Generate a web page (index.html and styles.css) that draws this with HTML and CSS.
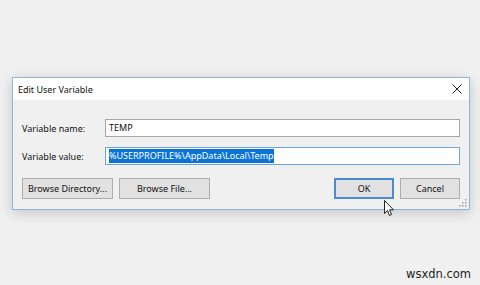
FILE: index.html
```html
<!DOCTYPE html>
<html>
<head>
<meta charset="utf-8">
<link rel="stylesheet" href="styles.css">
</head>
<body>
<div class="dialog">
  <div class="titlebar">
    <span class="title">Edit User Variable</span>
    <svg class="close" width="10" height="10" viewBox="0 0 10 10"><path d="M0.5 0.5 L9.5 9.5 M9.5 0.5 L0.5 9.5" stroke="#222" stroke-width="1" fill="none"/></svg>
  </div>
  <div class="content">
    <div class="row">
      <label class="label">Variable name:</label>
      <div class="field">TEMP</div>
    </div>
    <div class="row">
      <label class="label">Variable value:</label>
      <div class="field focused"><span class="sel">%USERPROFILE%\AppData\Local\Temp</span></div>
    </div>
    <div class="buttons">
      <button class="btn wide">Browse Directory...</button>
      <button class="btn wide">Browse File...</button>
      <span class="spacer"></span>
      <button class="btn small default">OK</button>
      <button class="btn small">Cancel</button>
    </div>
    <svg class="grip" width="8" height="8" viewBox="0 0 8 8" fill="#a0a0a0">
      <rect x="6" y="0" width="1.5" height="1.5"/>
      <rect x="3" y="3" width="1.5" height="1.5"/><rect x="6" y="3" width="1.5" height="1.5"/>
      <rect x="0" y="6" width="1.5" height="1.5"/><rect x="3" y="6" width="1.5" height="1.5"/><rect x="6" y="6" width="1.5" height="1.5"/>
    </svg>
  </div>
</div>
<svg class="cursor" width="11" height="17" viewBox="0 0 11 17">
  <path d="M0.5 0.5 L0.5 13.5 L3.5 10.5 L5.5 15.5 L7.5 14.5 L5.5 9.8 L9.5 9.8 Z" fill="#fff" stroke="#222" stroke-width="1" stroke-linejoin="round"/>
</svg>
<div class="watermark">wsxdn.com</div>
</body>
</html>
```
FILE: styles.css
```css
html, body {
  margin: 0;
  padding: 0;
  background: #f0f0f0;
  width: 480px;
  height: 285px;
  overflow: hidden;
  font-family: "Noto Sans", "Open Sans", sans-serif;
}
body {
  position: relative;
  padding-top: 77px;
  box-sizing: border-box;
}
.dialog {
  margin-left: 12px;
  width: 458px;
  height: 133px;
  box-sizing: border-box;
  border: 1px solid #8fb3d9;
  background: #f0f0f0;
  box-shadow: 0 3px 12px rgba(0,0,0,0.18);
  display: flex;
  flex-direction: column;
}
.titlebar {
  height: 22px;
  background: #ffffff;
  display: flex;
  align-items: center;
  padding: 0 7px 0 5px;
  flex: none;
}
.title {
  font-size: 9px;
  color: #111;
  flex: 1;
  padding-top: 1px;
}
.content {
  position: relative;
  flex: 1;
  padding: 19px 9px 0 9px;
  display: flex;
  flex-direction: column;
}
.row {
  display: flex;
  align-items: center;
  height: 18px;
  margin-bottom: 10px;
}
.label {
  width: 83px;
  font-size: 9px;
  color: #111;
}
.field {
  flex: 1;
  height: 18px;
  box-sizing: border-box;
  border: 1px solid #a6a6a6;
  background: #fff;
  font-size: 9px;
  line-height: 16px;
  padding-left: 3px;
  color: #111;
}
.field.focused {
  border-color: #6fa3dc;
}
.sel {
  background: #0a74d6;
  color: #fff;
  display: inline-block;
  line-height: 14px;
}
.buttons {
  display: flex;
  gap: 6px;
  margin-top: 3px;
}
.spacer { flex: 1; }
.btn {
  height: 21px;
  box-sizing: border-box;
  border: 1px solid #adadad;
  background: #e1e1e1;
  font-family: "Noto Sans", "Open Sans", sans-serif;
  font-size: 9px;
  color: #111;
  padding: 0;
}
.btn.wide { width: 91px; }
.btn.small { width: 60px; }
.btn.default {
  border: 2px solid #4c8bd0;
}
.grip {
  position: absolute;
  right: 2px;
  bottom: 2px;
}
.cursor {
  position: absolute;
  left: 384px;
  top: 200px;
}
.watermark {
  position: absolute;
  left: 406px;
  top: 267px;
  font-family: "DejaVu Sans", sans-serif;
  font-size: 11.5px;
  color: #222;
}
```
